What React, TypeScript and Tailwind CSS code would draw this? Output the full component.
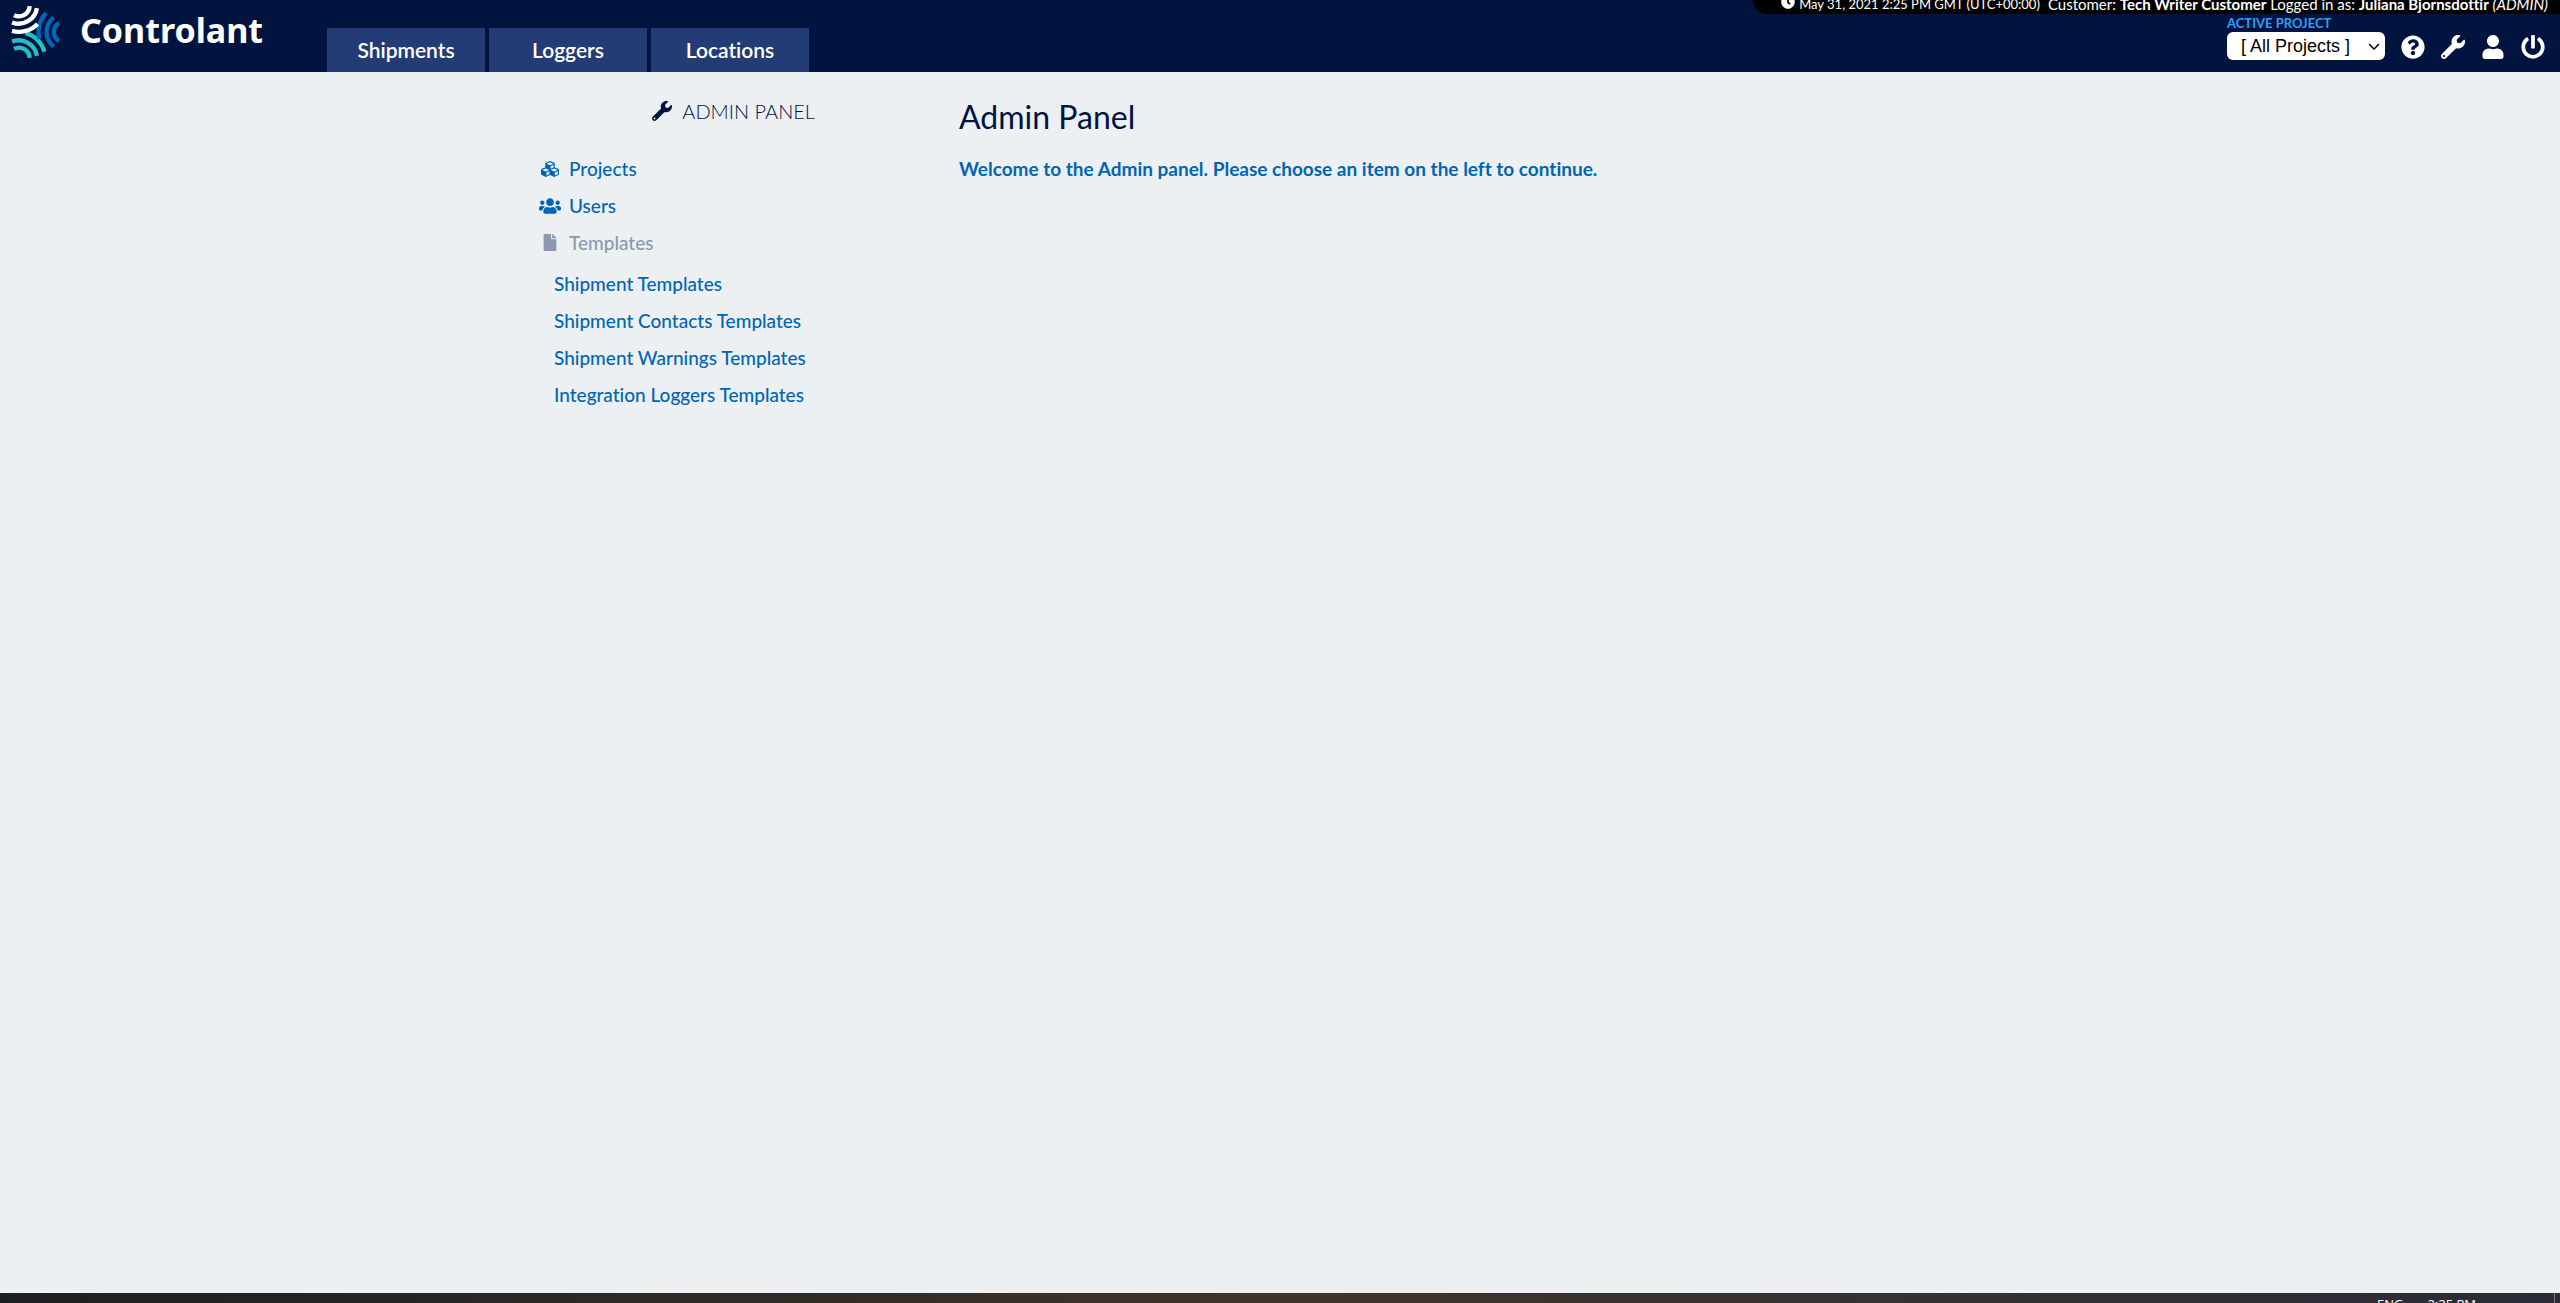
import {
  FaClock,
  FaCubes,
  FaFile,
  FaPowerOff,
  FaQuestionCircle,
  FaUser,
  FaUsers,
  FaWrench,
} from "react-icons/fa";
import { FaChevronDown } from "react-icons/fa6";

const tabs = ["Shipments", "Loggers", "Locations"];

const templateLinks = [
  "Shipment Templates",
  "Shipment Contacts Templates",
  "Shipment Warnings Templates",
  "Integration Loggers Templates",
];

const actions = [
  { label: "Help", Icon: FaQuestionCircle },
  { label: "Admin panel", Icon: FaWrench },
  { label: "Account", Icon: FaUser },
  { label: "Log out", Icon: FaPowerOff },
];

function LogoArcs({ color, angle }: { color: string; angle: number }) {
  return (
    <g
      transform={`rotate(${angle} 102 96)`}
      fill="none"
      stroke={color}
      strokeWidth="13"
    >
      <path d="M176 69A32 32 0 0 0 176 123" />
      <path d="M160 53A55 55 0 0 0 160 139" />
      <path d="M138 40A78 78 0 0 0 118 117" />
    </g>
  );
}

function Logo() {
  return (
    <a href="#" className="flex h-16 items-center gap-[18px]">
      <svg viewBox="30 15 155 162" className="h-[54px] w-[52px]" aria-hidden="true">
        <LogoArcs color="#29bfc2" angle={120} />
        <LogoArcs color="#0068b8" angle={0} />
        <LogoArcs color="#ffffff" angle={240} />
      </svg>
      <span className="mb-1 font-['Noto_Sans',sans-serif] text-[34px] leading-10 font-bold">
        Controlant
      </span>
    </a>
  );
}

function StatusBar() {
  return (
    <div className="absolute top-0 right-0 flex h-[14px] items-end overflow-hidden rounded-bl-[14px] bg-black pr-3 pl-7 text-[15px] leading-5 whitespace-nowrap">
      <FaClock className="mr-1 mb-[5px] size-[14px] shrink-0" />
      <span className="mr-2 text-[13px]">
        May 31, 2021 2:25 PM GMT (UTC+00:00)
      </span>
      <span>
        Customer: <b>Tech Writer Customer</b> Logged in as:{" "}
        <b>Juliana Bjornsdottir</b> <i>(ADMIN)</i>
      </span>
    </div>
  );
}

function Header() {
  return (
    <header className="relative flex h-[72px] justify-between bg-[#00143f] pr-[15px] pl-[10px] text-white">
      <div className="flex">
        <div className="w-[317px]">
          <Logo />
        </div>
        <nav className="flex items-end gap-1">
          {tabs.map((tab) => (
            <a
              key={tab}
              href="#"
              className="flex h-11 w-[158px] items-center justify-center bg-[#233c75] text-[21px] font-semibold"
            >
              {tab}
            </a>
          ))}
        </nav>
      </div>
      <div className="flex items-end gap-4 pb-3">
        <div className="flex flex-col">
          <label
            htmlFor="project"
            className="text-[13px] leading-[18px] font-bold text-[#2d9ffb]"
          >
            ACTIVE PROJECT
          </label>
          <div className="relative">
            <select
              id="project"
              className="block h-7 w-[158px] appearance-none rounded-md bg-white pl-[14px] font-['Liberation_Sans',Arial,sans-serif] text-lg leading-7 text-black"
            >
              <option>[ All Projects ]</option>
            </select>
            <FaChevronDown className="pointer-events-none absolute top-2 right-[5px] size-3 text-black" />
          </div>
        </div>
        <div className="flex gap-4 pb-px">
          {actions.map(({ label, Icon }) => (
            <button key={label} type="button" aria-label={label}>
              <Icon className="size-6" />
            </button>
          ))}
        </div>
      </div>
      <StatusBar />
    </header>
  );
}

function Sidebar() {
  return (
    <aside className="w-[292px]">
      <h2 className="flex items-center justify-end gap-[10px] pr-4 text-xl leading-[30px] font-light text-[#00143f]">
        <FaWrench className="size-5" />
        ADMIN PANEL
      </h2>
      <nav className="mt-6 text-[19px] leading-[37px] font-medium text-[#0066b3]">
        <ul>
          <li>
            <a href="#" className="flex items-center gap-2">
              <FaCubes className="h-[18px] w-[22px]" />
              Projects
            </a>
          </li>
          <li>
            <a href="#" className="flex items-center gap-2">
              <FaUsers className="size-[22px]" />
              Users
            </a>
          </li>
          <li className="flex items-center gap-2 text-[#8b99ae]">
            <FaFile className="h-[17px] w-[22px]" />
            Templates
          </li>
        </ul>
        <ul className="mt-1 pl-[15px]">
          {templateLinks.map((link) => (
            <li key={link}>
              <a href="#">{link}</a>
            </li>
          ))}
        </ul>
      </nav>
    </aside>
  );
}

export default function App() {
  return (
    <div className="flex min-h-screen flex-col bg-[#ecf0f3] font-['Lato',sans-serif] [font-variant-ligatures:none]">
      <Header />
      <main className="mx-auto flex w-full max-w-[1482px] flex-1 gap-32 pt-6">
        <Sidebar />
        <section className="pt-px">
          <h1 className="text-[32px] leading-10 text-[#00143f]">Admin Panel</h1>
          <p className="mt-5 text-[19px] leading-6 font-bold text-[#0066b3]">
            Welcome to the Admin panel. Please choose an item on the left to
            continue.
          </p>
        </section>
      </main>
      <footer className="flex h-[10px] items-start justify-end overflow-hidden bg-linear-to-r from-[#1c1f21] via-[#40342b] to-[#2a2d38] font-['Open_Sans',sans-serif] text-[13px] leading-4 text-white">
        <div className="flex gap-6 pt-[3px] pr-[78px]">
          <span>ENG</span>
          <span>2:25 PM</span>
        </div>
        <div className="mr-[5px] h-full w-px bg-[#777777]" />
      </footer>
    </div>
  );
}
